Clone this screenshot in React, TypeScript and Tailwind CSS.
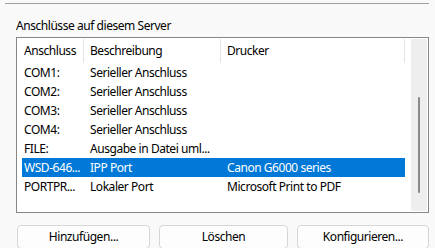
import React from "react";

const rows: { port: string; desc: string; printer: string; sel?: boolean }[] = [
  { port: "COM1:", desc: "Serieller Anschluss", printer: "" },
  { port: "COM2:", desc: "Serieller Anschluss", printer: "" },
  { port: "COM3:", desc: "Serieller Anschluss", printer: "" },
  { port: "COM4:", desc: "Serieller Anschluss", printer: "" },
  { port: "FILE:", desc: "Ausgabe in Datei uml...", printer: "" },
  { port: "WSD-646...", desc: "IPP Port", printer: "Canon G6000 series", sel: true },
  { port: "PORTPR...", desc: "Lokaler Port", printer: "Microsoft Print to PDF" },
];

export default function App() {
  return (
    <div
      className="relative w-[435px] h-[248px] overflow-hidden bg-[#f9f9f9] text-[12px] tracking-[-0.45px] text-[#000]"
      style={{ fontFamily: '"Noto Sans", "Open Sans", sans-serif' }}
    >
      <div className="mt-[3px] ml-[5px] w-[424px] h-px bg-[#a0a0a0]" />
      <div className="ml-[16px] mt-[14px] h-[16px] leading-[16px]">Anschlüsse auf diesem Server</div>
      <div className="ml-[16px] mt-[3px] w-[413px] h-[176px] border border-[#868686] bg-white flex">
        <div className="flex-1 flex flex-col">
          <div className="h-[25px] flex items-center">
            <div className="w-[66px] pl-[7px] h-full flex items-center">Anschluss</div>
            <div className="w-px h-[24px] bg-[#e5e5e5] self-start mt-px" />
            <div className="w-[136px] pl-[6px] h-full flex items-center">Beschreibung</div>
            <div className="w-px h-[24px] bg-[#e5e5e5] self-start mt-px" />
            <div className="w-[183px] pl-[6px] h-full flex items-center">Drucker</div>
            <div className="w-px h-[24px] bg-[#e5e5e5] self-start mt-px" />
          </div>
          {rows.map((r) => (
            <div
              key={r.port}
              className={
                "ml-[5px] w-[383px] h-[19px] flex items-center whitespace-nowrap " +
                (r.sel ? "bg-[#0078d7] text-white" : "")
              }
            >
              <div className="w-[62px] pl-[2px]">{r.port}</div>
              <div className="w-[137px] pl-[6px]">{r.desc}</div>
              <div className="pl-[6px]">{r.printer}</div>
            </div>
          ))}
        </div>
        <div className="w-[16px] mt-px mb-px mr-px bg-[#eeeeee] relative">
          <div className="absolute left-[7px] top-[58px] w-[2px] h-[96px] bg-[#8a8a8a] rounded-full" />
        </div>
      </div>
      <div className="mt-[12px] flex ml-[17px]">
        <button className="w-[133px] h-[24px] rounded-[4px] border border-[#d6d6d6] bg-[#fdfdfd]">Hinzufügen...</button>
        <button className="ml-[9px] w-[129px] h-[24px] rounded-[4px] border border-[#d6d6d6] bg-[#fdfdfd]">Löschen</button>
        <button className="ml-[9px] w-[132px] h-[24px] rounded-[4px] border border-[#d6d6d6] bg-[#fdfdfd]">Konfigurieren...</button>
      </div>
    </div>
  );
}
